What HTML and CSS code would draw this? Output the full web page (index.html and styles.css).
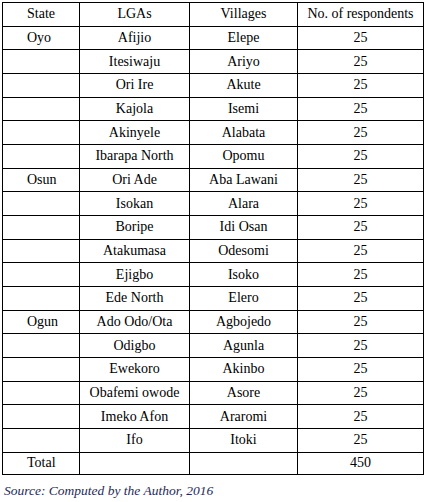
FILE: index.html
```html
<!DOCTYPE html>
<html>
<head>
<meta charset="utf-8">
<link rel="stylesheet" href="styles.css">
</head>
<body>
<div class="wrap">
<table class="data">
<colgroup>
<col class="c1"><col class="c2"><col class="c3"><col class="c4">
</colgroup>
<tr><td class="st">State</td><td>LGAs</td><td>Villages</td><td>No. of respondents</td></tr>
<tr><td class="st">Oyo</td><td>Afijio</td><td>Elepe</td><td>25</td></tr>
<tr><td class="st"></td><td>Itesiwaju</td><td>Ariyo</td><td>25</td></tr>
<tr><td class="st"></td><td>Ori Ire</td><td>Akute</td><td>25</td></tr>
<tr><td class="st"></td><td>Kajola</td><td>Isemi</td><td>25</td></tr>
<tr><td class="st"></td><td>Akinyele</td><td>Alabata</td><td>25</td></tr>
<tr><td class="st"></td><td>Ibarapa North</td><td>Opomu</td><td>25</td></tr>
<tr><td class="st">Osun</td><td>Ori Ade</td><td>Aba Lawani</td><td>25</td></tr>
<tr><td class="st"></td><td>Isokan</td><td>Alara</td><td>25</td></tr>
<tr><td class="st"></td><td>Boripe</td><td>Idi Osan</td><td>25</td></tr>
<tr><td class="st"></td><td>Atakumasa</td><td>Odesomi</td><td>25</td></tr>
<tr><td class="st"></td><td>Ejigbo</td><td>Isoko</td><td>25</td></tr>
<tr><td class="st"></td><td>Ede North</td><td>Elero</td><td>25</td></tr>
<tr><td class="st">Ogun</td><td>Ado Odo/Ota</td><td>Agbojedo</td><td>25</td></tr>
<tr><td class="st"></td><td>Odigbo</td><td>Agunla</td><td>25</td></tr>
<tr><td class="st"></td><td>Ewekoro</td><td>Akinbo</td><td>25</td></tr>
<tr><td class="st"></td><td>Obafemi owode</td><td>Asore</td><td>25</td></tr>
<tr><td class="st"></td><td>Imeko Afon</td><td>Araromi</td><td>25</td></tr>
<tr><td class="st"></td><td>Ifo</td><td>Itoki</td><td>25</td></tr>
<tr class="total"><td class="st">Total</td><td></td><td></td><td>450</td></tr>
</table>
<p class="source">Source: Computed by the Author, 2016</p>
</div>
</body>
</html>
```
FILE: styles.css
```css
html, body {
  margin: 0;
  padding: 0;
  background: #fff;
}
body {
  font-family: "Liberation Serif", "Times New Roman", serif;
}
.wrap {
  padding: 2px 0 0 2px;
}
.data {
  border-collapse: collapse;
  table-layout: fixed;
  width: 421px;
  font-family: "Liberation Serif", "Times New Roman", serif;
  font-size: 14px;
  color: #000;
}
.c1 { width: 77px; }
.c2 { width: 110px; }
.c3 { width: 108px; }
.c4 { width: 126px; }
.data td {
  border: 1px solid #000;
  height: 23.68px;
  padding: 0 2px;
  text-align: center;
  vertical-align: middle;
  line-height: 16px;
  box-sizing: border-box;
}
.data td.st {
  text-align: left;
  padding-left: 24px;
}
.data tr.total td {
  height: 22px;
}
.source {
  margin: 8px 0 0 2px;
  font-family: "Liberation Serif", "Times New Roman", serif;
  font-style: italic;
  font-size: 13.5px;
  color: #1f2a5a;
}
```
